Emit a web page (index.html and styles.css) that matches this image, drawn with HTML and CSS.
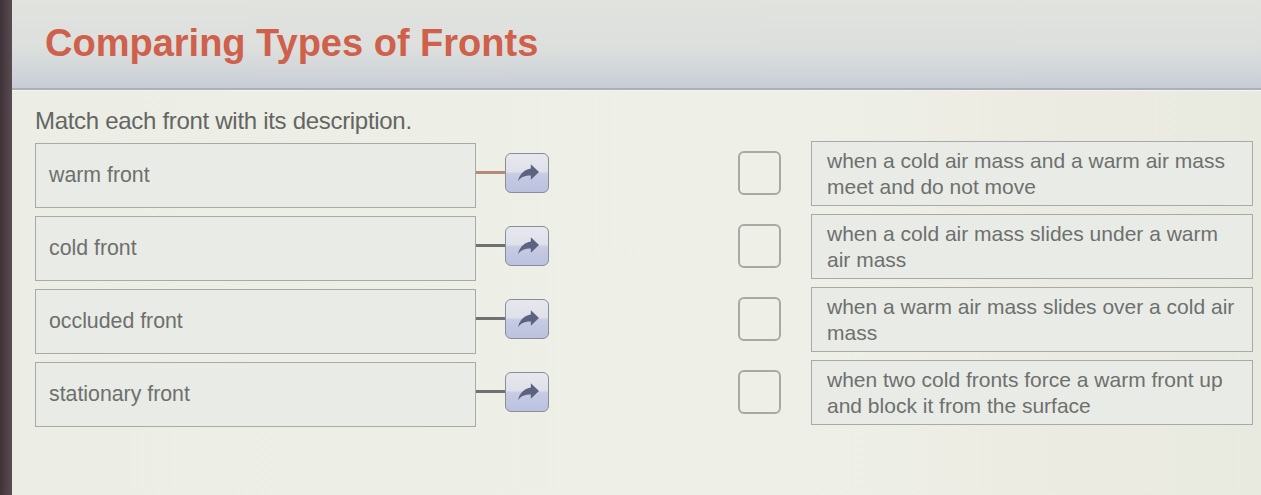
FILE: index.html
```html
<!DOCTYPE html>
<html lang="en">
<head>
  <meta charset="UTF-8" />
  <meta name="viewport" content="width=device-width, initial-scale=1" />
  <title>Comparing Types of Fronts</title>
  <link rel="stylesheet" href="styles.css">
</head>
<body>
  <div class="frame">
    <div class="bezel"></div>

    <div class="screen">
      <header class="lesson-header">
        <h1>Comparing Types of Fronts</h1>
      </header>

      <main class="activity">
        <p class="prompt">Match each front with its description.</p>

        <div class="match-list">
          <div class="match-row">
            <div class="term">warm front</div>
            <div class="link">
              <span class="wire active"></span>
              <button class="send-btn" aria-label="Move">
                <svg viewBox="2 3 20 18"><path d="M14 8.5V5l7 6.6-7 6.6v-3.6c-5 0-8.5 1.4-11 4.8 1-4.8 4-9.6 11-10.9z"/></svg>
              </button>
            </div>
            <div class="slot"></div>
            <div class="answer">when a cold air mass and a warm air mass meet and do not move</div>
          </div>

          <div class="match-row">
            <div class="term">cold front</div>
            <div class="link">
              <span class="wire"></span>
              <button class="send-btn" aria-label="Move">
                <svg viewBox="2 3 20 18"><path d="M14 8.5V5l7 6.6-7 6.6v-3.6c-5 0-8.5 1.4-11 4.8 1-4.8 4-9.6 11-10.9z"/></svg>
              </button>
            </div>
            <div class="slot"></div>
            <div class="answer">when a cold air mass slides under a warm air mass</div>
          </div>

          <div class="match-row">
            <div class="term">occluded front</div>
            <div class="link">
              <span class="wire"></span>
              <button class="send-btn" aria-label="Move">
                <svg viewBox="2 3 20 18"><path d="M14 8.5V5l7 6.6-7 6.6v-3.6c-5 0-8.5 1.4-11 4.8 1-4.8 4-9.6 11-10.9z"/></svg>
              </button>
            </div>
            <div class="slot"></div>
            <div class="answer">when a warm air mass slides over a cold air mass</div>
          </div>

          <div class="match-row">
            <div class="term">stationary front</div>
            <div class="link">
              <span class="wire"></span>
              <button class="send-btn" aria-label="Move">
                <svg viewBox="2 3 20 18"><path d="M14 8.5V5l7 6.6-7 6.6v-3.6c-5 0-8.5 1.4-11 4.8 1-4.8 4-9.6 11-10.9z"/></svg>
              </button>
            </div>
            <div class="slot"></div>
            <div class="answer">when two cold fronts force a warm front up and block it from the surface</div>
          </div>
        </div>
      </main>
    </div>
  </div>
</body>
</html>
```

FILE: styles.css
```css
body {
  margin: 0;
  padding: 0;
  font-family: 'Liberation Sans', Arial, sans-serif;
  background-color: #ecede5;
  overflow: hidden;
}

.frame {
  display: flex;
  height: 495px;
}

.bezel {
  width: 12px;
  flex-shrink: 0;
  background: linear-gradient(to right, #3e3338, #5a4c52);
}

.screen {
  flex: 1;
  background: linear-gradient(to right, #eceee6 0%, #eef0e8 60%, #ecebe2 85%, #e8eadf 100%);
}

.lesson-header {
  height: 90px;
  box-sizing: border-box;
  padding: 21px 0 0 33px;
  background: linear-gradient(to bottom, #e1e3df 0%, #dcdfdc 55%, #cfd4da 85%, #c8cdd5 100%);
  border-bottom: 2px solid #acb1b9;
  box-shadow: 0 1px 0 #f4f4f2;
}

.lesson-header h1 {
  margin: 0;
  font-size: 38px;
  line-height: 44px;
  font-weight: bold;
  color: #cf604b;
}

.activity {
  padding: 18px 0 0 23px;
}

.prompt {
  margin: 0 0 9px;
  font-size: 24px;
  line-height: 26px;
  color: #646664;
  letter-spacing: -0.3px;
}

.match-list {
  display: flex;
  flex-direction: column;
  gap: 8px;
}

.match-row {
  display: flex;
  align-items: center;
  height: 65px;
}

.term {
  width: 441px;
  height: 65px;
  box-sizing: border-box;
  padding-left: 13px;
  display: flex;
  align-items: center;
  border: 1px solid #a9aaa7;
  background-color: #e9ebe6;
  font-size: 21.3px;
  color: #6e706e;
}

.link {
  display: flex;
  align-items: center;
  margin-bottom: 6px;
}

.wire {
  width: 29px;
  height: 3px;
  background-color: #6f7170;
}

.wire.active {
  background-color: #b58a7c;
}

.send-btn {
  width: 44px;
  height: 40px;
  padding: 0;
  display: flex;
  align-items: center;
  justify-content: center;
  border: 1.5px solid #898d98;
  border-radius: 6px;
  background: linear-gradient(to bottom, #e7e8ee 0%, #dfe1ea 46%, #c7cbe3 52%, #bbc1df 100%);
  cursor: pointer;
}

.send-btn svg {
  width: 27px;
  height: 21px;
  flex-shrink: 0;
  margin-left: 2px;
  fill: #5b6381;
}

.slot {
  width: 43px;
  height: 44px;
  box-sizing: border-box;
  margin: 0 30px 6px 189px;
  border: 2px solid #a7a9a5;
  border-radius: 6px;
}

.answer {
  width: 442px;
  height: 65px;
  box-sizing: border-box;
  padding: 0 6px 0 15px;
  display: flex;
  align-items: center;
  margin-bottom: 4px;
  border: 1px solid #a9aaa7;
  background-color: #e9ebe6;
  font-size: 21px;
  line-height: 26px;
  color: #6e706e;
}
```
